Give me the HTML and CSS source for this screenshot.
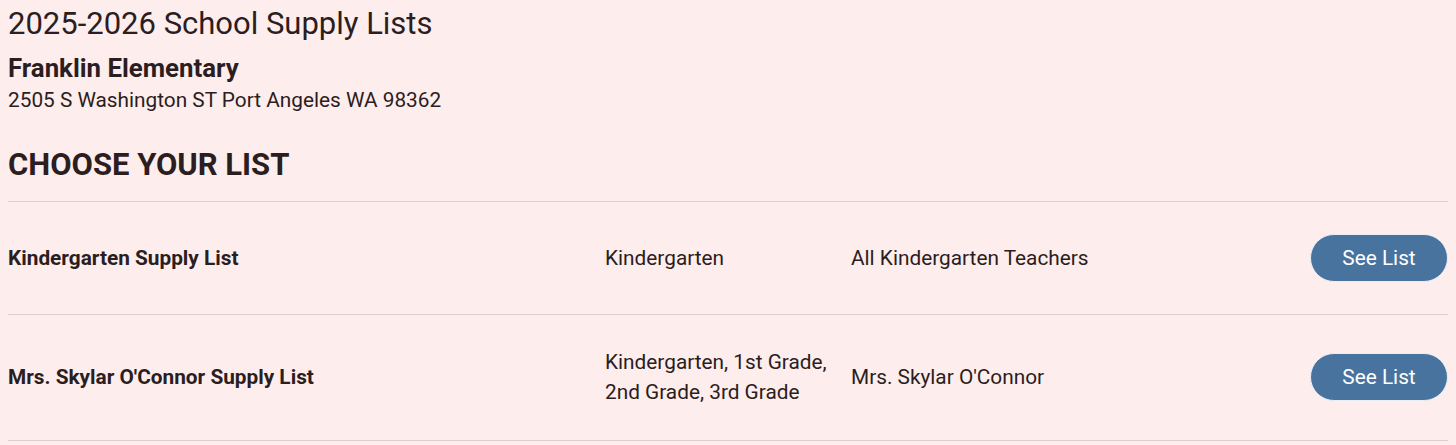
FILE: index.html
```html
<!DOCTYPE html>
<html lang="en">
<head>
<meta charset="utf-8">
<title>2025-2026 School Supply Lists</title>
<link rel="stylesheet" href="styles.css">
</head>
<body>
<main class="page">
  <h1 class="title">2025-2026 School Supply Lists</h1>
  <h2 class="school">Franklin Elementary</h2>
  <p class="address">2505 S Washington ST Port Angeles WA 98362</p>
  <h2 class="choose">CHOOSE YOUR LIST</h2>
  <div class="lists">
    <div class="row">
      <div class="name">Kindergarten Supply List</div>
      <div class="grades">Kindergarten</div>
      <div class="teacher">All Kindergarten Teachers</div>
      <div class="action"><a class="btn" href="#">See List</a></div>
    </div>
    <div class="row">
      <div class="name">Mrs. Skylar O'Connor Supply List</div>
      <div class="grades">Kindergarten, 1st Grade, 2nd Grade, 3rd Grade</div>
      <div class="teacher">Mrs. Skylar O'Connor</div>
      <div class="action"><a class="btn" href="#">See List</a></div>
    </div>
  </div>
</main>
</body>
</html>
```

FILE: styles.css
```css
html, body {
  margin: 0;
  padding: 0;
  background: #fdeded;
}
body {
  font-family: Roboto, "Liberation Sans", sans-serif;
  color: #2b1d20;
}
.page {
  padding: 5px 8px 0 8px;
}
.title {
  margin: 0;
  font-size: 31px;
  font-weight: 400;
  line-height: 38px;
}
.school {
  margin: 8px 0 0 0;
  font-size: 25.8px;
  font-weight: 700;
  line-height: 34px;
}
.address {
  margin: 0;
  font-size: 20.8px;
  line-height: 30px;
}
.choose {
  margin: 31px 0 0 0;
  font-size: 31px;
  font-weight: 700;
  line-height: 38px;
}
.lists {
  margin-top: 17px;
  border-top: 1px solid #dfcdcf;
}
.row {
  display: grid;
  grid-template-columns: 597px 246px 1fr auto;
  align-items: center;
  padding: 32px 0;
  border-bottom: 1px solid #dfcdcf;
  font-size: 20.8px;
  line-height: 30px;
}
.row:last-child {
  padding-bottom: 33px;
}
.name {
  font-weight: 700;
}
.grades {
  padding-right: 12px;
}
.btn {
  display: block;
  box-sizing: border-box;
  height: 48px;
  width: 138px;
  padding: 8px 0;
  text-align: center;
  border-radius: 24px;
  border: 1px solid #e9eef4;
  background: #49739f;
  color: #ffffff;
  text-decoration: none;
  font-size: 20.8px;
  line-height: 30px;
}
```
